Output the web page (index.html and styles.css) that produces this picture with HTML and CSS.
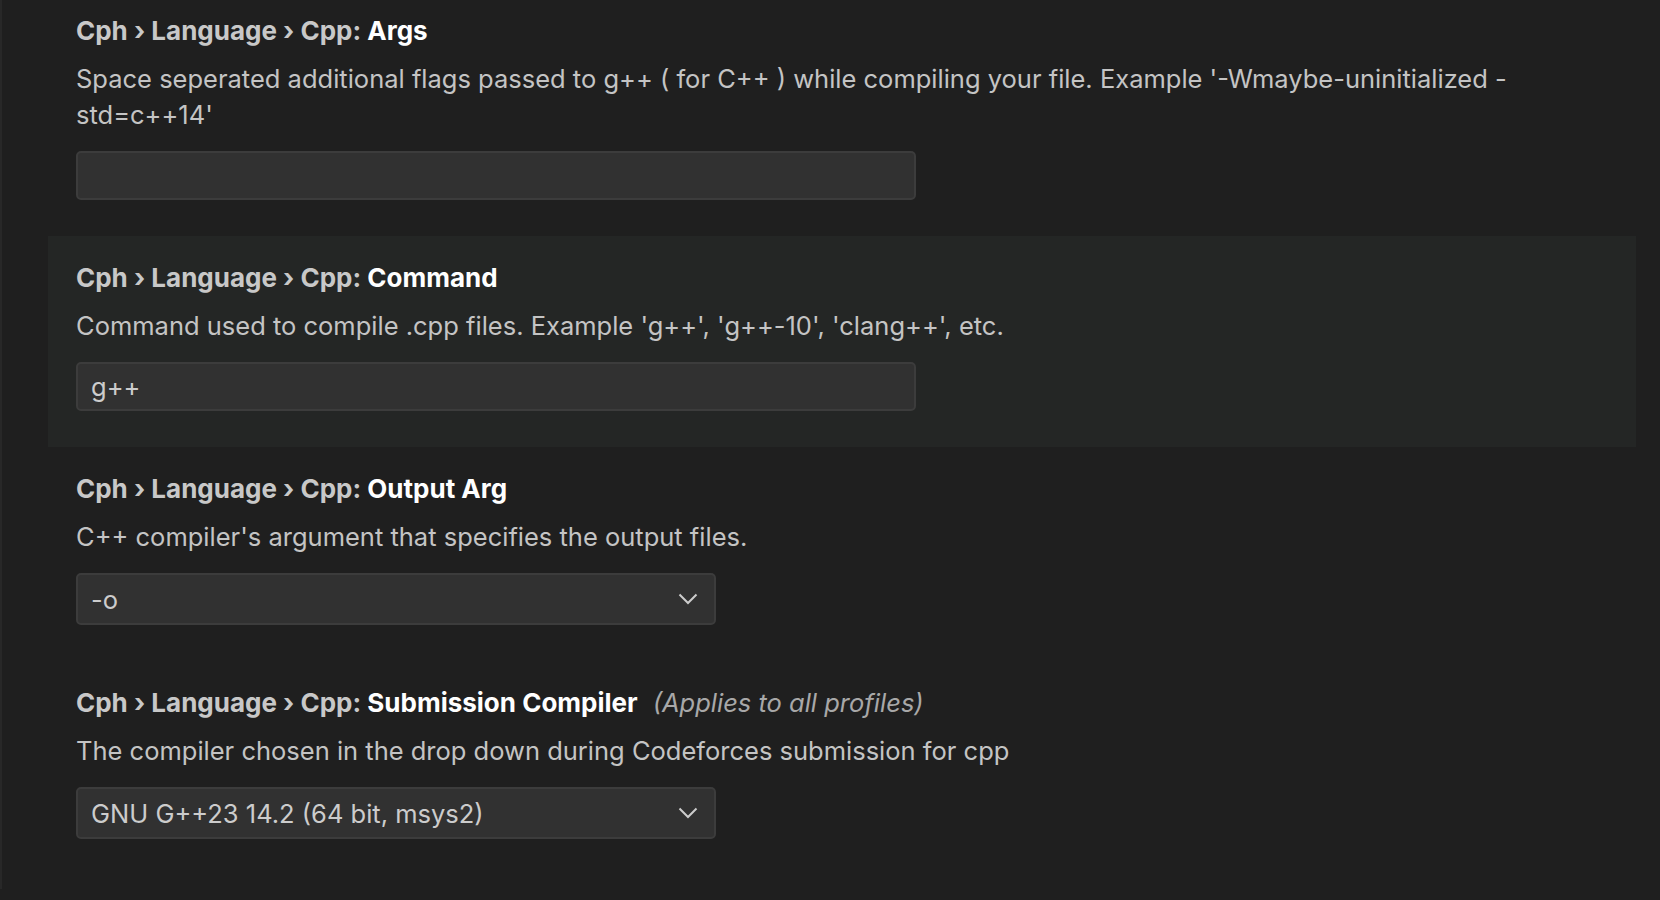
FILE: index.html
```html
<!DOCTYPE html>
<html lang="en">
<head>
<meta charset="utf-8">
<title>Settings</title>
<link rel="stylesheet" href="styles.css">
</head>
<body>
<div class="pane">
  <div class="list">
    <div class="item">
      <div class="title"><span class="cat">Cph › Language › Cpp: </span><span class="label">Args</span></div>
      <div class="desc">Space seperated additional flags passed to g++ ( for C++ ) while compiling your file. Example '-Wmaybe-uninitialized -std=c++14'</div>
      <div class="input"></div>
    </div>
    <div class="item focused">
      <div class="title"><span class="cat">Cph › Language › Cpp: </span><span class="label">Command</span></div>
      <div class="desc">Command used to compile .cpp files. Example 'g++', 'g++-10', 'clang++', etc.</div>
      <div class="input">g++</div>
    </div>
    <div class="item">
      <div class="title"><span class="cat">Cph › Language › Cpp: </span><span class="label">Output Arg</span></div>
      <div class="desc">C++ compiler's argument that specifies the output files.</div>
      <div class="select"><span>-o</span><svg class="chev" width="20" height="12" viewBox="0 0 20 12"><path d="M1.5 1.5 L10 10 L18.5 1.5" fill="none" stroke="#cccccc" stroke-width="2"/></svg></div>
    </div>
    <div class="item">
      <div class="title"><span class="cat">Cph › Language › Cpp: </span><span class="label">Submission Compiler</span><span class="note">(Applies to all profiles)</span></div>
      <div class="desc">The compiler chosen in the drop down during Codeforces submission for cpp</div>
      <div class="select"><span>GNU G++23 14.2 (64 bit, msys2)</span><svg class="chev" width="20" height="12" viewBox="0 0 20 12"><path d="M1.5 1.5 L10 10 L18.5 1.5" fill="none" stroke="#cccccc" stroke-width="2"/></svg></div>
    </div>
  </div>
</div>
</body>
</html>
```
FILE: styles.css
```css
html, body {
  margin: 0;
  padding: 0;
  background: #1f1f1f;
  height: 100%;
  overflow: hidden;
}
body {
  font-family: Inter, "Noto Sans", sans-serif;
  font-size: 25.5px;
  color: #cccccc;
}
.pane {
  height: 100%;
  border-left: 2px solid #282828;
  box-sizing: border-box;
}
.list {
  margin-top: -11px;
  display: flex;
  flex-direction: column;
}
.item {
  margin-left: 46px;
  width: 1588px;
  padding: 24px 28px 36px;
  box-sizing: border-box;
  display: flex;
  flex-direction: column;
}
.item.focused {
  background: #242625;
}
.title {
  font-size: 26px;
  line-height: 36px;
  font-weight: 700;
  white-space: nowrap;
}
.cat {
  color: #c8c8c8;
}
.label {
  color: #ffffff;
}
.note {
  margin-left: 15px;
  font-style: italic;
  font-weight: 400;
  font-size: 25.5px;
  color: #a8a8a8;
}
.desc {
  margin-top: 12px;
  line-height: 36px;
  color: #c4c4c4;
  max-width: 1450px;
}
.input, .select {
  margin-top: 18px;
  box-sizing: border-box;
  background: #313131;
  border: 2px solid #3c3c3c;
  border-radius: 5px;
  color: #cccccc;
  display: flex;
  align-items: center;
}
.input {
  width: 840px;
  height: 49px;
  padding: 0 13px;
}
.select {
  width: 640px;
  height: 52px;
  padding: 0 16px 0 13px;
  justify-content: space-between;
}
.chev {
  display: block;
}
```
